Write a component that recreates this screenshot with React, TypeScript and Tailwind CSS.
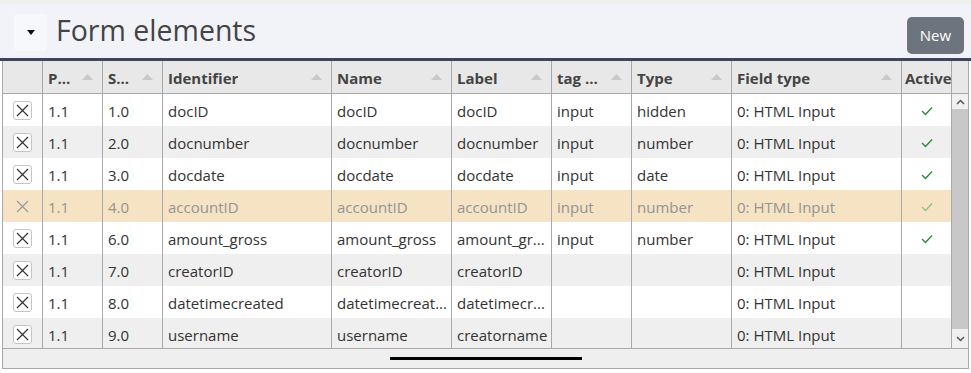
import React from "react";

type Row = {
  p: string;
  s: string;
  id: string;
  name: string;
  label: string;
  tag: string;
  type: string;
  field: string;
  active: boolean;
  disabled?: boolean;
};

const rows: Row[] = [
  { p: "1.1", s: "1.0", id: "docID", name: "docID", label: "docID", tag: "input", type: "hidden", field: "0: HTML Input", active: true },
  { p: "1.1", s: "2.0", id: "docnumber", name: "docnumber", label: "docnumber", tag: "input", type: "number", field: "0: HTML Input", active: true },
  { p: "1.1", s: "3.0", id: "docdate", name: "docdate", label: "docdate", tag: "input", type: "date", field: "0: HTML Input", active: true },
  { p: "1.1", s: "4.0", id: "accountID", name: "accountID", label: "accountID", tag: "input", type: "number", field: "0: HTML Input", active: true, disabled: true },
  { p: "1.1", s: "6.0", id: "amount_gross", name: "amount_gross", label: "amount_gr...", tag: "input", type: "number", field: "0: HTML Input", active: true },
  { p: "1.1", s: "7.0", id: "creatorID", name: "creatorID", label: "creatorID", tag: "", type: "", field: "0: HTML Input", active: false },
  { p: "1.1", s: "8.0", id: "datetimecreated", name: "datetimecreat...", label: "datetimecr...", tag: "", type: "", field: "0: HTML Input", active: false },
  { p: "1.1", s: "9.0", id: "username", name: "username", label: "creatorname", tag: "", type: "", field: "0: HTML Input", active: false },
];

const columns = [
  { key: "p", title: "P...", w: "w-[60px]" },
  { key: "s", title: "S...", w: "w-[60px]" },
  { key: "id", title: "Identifier", w: "w-[169px]" },
  { key: "name", title: "Name", w: "w-[120px]" },
  { key: "label", title: "Label", w: "w-[100px]" },
  { key: "tag", title: "tag ...", w: "w-[80px]" },
  { key: "type", title: "Type", w: "w-[100px]" },
  { key: "field", title: "Field type", w: "w-[170px]" },
] as const;

function SortArrow() {
  return (
    <svg width="11" height="6" viewBox="0 0 11 6" className="shrink-0">
      <path d="M0 6 L5.5 0 L11 6 Z" fill="#c9c9c9" />
    </svg>
  );
}

function Check({ dim }: { dim?: boolean }) {
  return (
    <svg width="12" height="10" viewBox="0 0 12 10">
      <path
        d="M1 5 L4.5 8.5 L11 1.5"
        fill="none"
        stroke={dim ? "#8fbf8f" : "#2e8b2e"}
        strokeWidth="1.4"
      />
    </svg>
  );
}

function DeleteBox({ dim }: { dim?: boolean }) {
  return (
    <div
      className={`w-[19px] h-[19px] rounded-[3px] flex items-center justify-center ${
        dim ? "" : "border border-[#c4c4c4] bg-white"
      }`}
    >
      <svg width="13" height="13" viewBox="0 0 13 13">
        <path
          d="M1 1 L12 12 M12 1 L1 12"
          stroke={dim ? "#9a9a9a" : "#333"}
          strokeWidth="1.2"
        />
      </svg>
    </div>
  );
}

export default function App() {
  return (
    <div className="w-[971px] h-[373px] bg-white font-['Open_Sans',sans-serif] text-[#333] overflow-hidden">
      {/* Header */}
      <div className="border-t-4 border-[#efefef] bg-[#f2f3f8] h-[58px] flex items-center px-[14px]">
        <button className="w-[33px] h-[37px] mt-[2px] rounded-[4px] bg-[#f7f8fb] flex items-center justify-center">
          <svg width="8" height="5" viewBox="0 0 8 5">
            <path d="M0 0 L8 0 L4 5 Z" fill="#111" />
          </svg>
        </button>
        <h1 className="ml-[9px] text-[28.5px] leading-none text-[#444] mt-[-2px]">Form elements</h1>
        <button className="ml-auto mr-[-7px] mt-[8px] w-[57px] h-[37px] rounded-[5px] bg-[#6c757d] text-white text-[15px]">
          New
        </button>
      </div>
      <div className="h-[3px] bg-[#3b4560]" />

      {/* Grid */}
      <div className="ml-[2px] w-[967px] border-x border-b border-[#a9a9a9] text-[15px]">
        {/* Header row */}
        <div className="flex h-[33px] bg-[#e8e8e8] border-b border-[#a9a9a9] font-bold text-[#444]">
          <div className="w-[40px] border-r border-[#a9a9a9]" />
          {columns.map((c) => (
            <div
              key={c.key}
              className={`${c.w} border-r border-[#a9a9a9] flex items-center pl-[5px] pr-[9px] pt-[2px]`}
            >
              <span className="truncate">{c.title}</span>
              <span className="ml-auto pl-1 mt-[-2px]">
                <SortArrow />
              </span>
            </div>
          ))}
          <div className="w-[50px] border-r border-[#a9a9a9] flex items-center pl-[3px] pt-[2px] overflow-hidden whitespace-nowrap">
            Active
          </div>
          <div className="flex-1" />
        </div>

        {/* Body */}
        <div className="flex h-[254px]">
          <div className="w-[949px] overflow-hidden">
            {rows.map((r, i) => {
              const bg = r.disabled ? "bg-[#f5e3c4]" : i % 2 === 1 ? "bg-[#efefef]" : "bg-white";
              const fg = r.disabled ? "text-[#949494]" : "text-[#333]";
              const cell = "border-r border-[#a9a9a9] flex items-center pl-[5px] pt-[3px] whitespace-nowrap overflow-hidden";
              return (
                <div key={r.s} className={`flex h-[32px] shrink-0 ${bg} ${fg}`}>
                  <div className="w-[40px] border-r border-[#a9a9a9] flex items-center justify-center">
                    <DeleteBox dim={r.disabled} />
                  </div>
                  <div className={`w-[60px] ${cell}`}>{r.p}</div>
                  <div className={`w-[60px] ${cell}`}>{r.s}</div>
                  <div className={`w-[169px] ${cell}`}>{r.id}</div>
                  <div className={`w-[120px] ${cell}`}>{r.name}</div>
                  <div className={`w-[100px] ${cell}`}>{r.label}</div>
                  <div className={`w-[80px] ${cell}`}>{r.tag}</div>
                  <div className={`w-[100px] ${cell}`}>{r.type}</div>
                  <div className={`w-[170px] ${cell}`}>{r.field}</div>
                  <div className="w-[50px] border-r border-[#a9a9a9] flex items-center justify-center pt-[2px]">
                    {r.active && <Check dim={r.disabled} />}
                  </div>
                </div>
              );
            })}
          </div>
          {/* Vertical scrollbar */}
          <div className="w-[16px] flex flex-col bg-[#f0f0f0]">
            <div className="h-[15px] flex items-center justify-center">
              <svg width="9" height="6" viewBox="0 0 9 6">
                <path d="M1 5 L4.5 1.5 L8 5" fill="none" stroke="#555" strokeWidth="1.5" />
              </svg>
            </div>
            <div className="flex-1 bg-[#c8c8c8]" />
            <div className="h-[19px] flex items-center justify-center">
              <svg width="9" height="6" viewBox="0 0 9 6">
                <path d="M1 1 L4.5 4.5 L8 1" fill="none" stroke="#555" strokeWidth="1.5" />
              </svg>
            </div>
          </div>
        </div>

        {/* Horizontal scrollbar */}
        <div className="h-[20px] border-t border-[#a9a9a9] bg-[#efefef] flex items-center">
          <div className="ml-[387px] w-[192px] h-[3px] bg-black" />
        </div>
      </div>
    </div>
  );
}
